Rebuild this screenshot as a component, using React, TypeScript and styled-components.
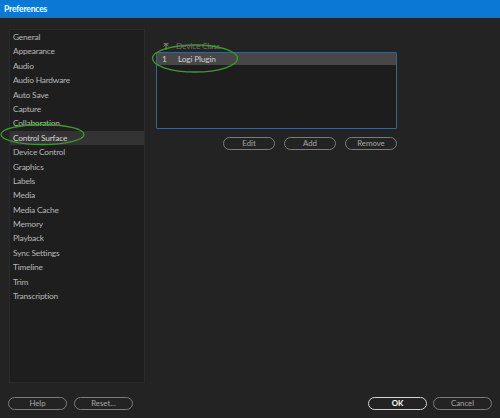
import React from 'react'
import styled, { createGlobalStyle } from 'styled-components'

const GlobalStyle = createGlobalStyle`
  html, body {
    margin: 0;
    padding: 0;
    background: #232323;
  }
  body {
    font-family: Lato, "Liberation Sans", sans-serif;
    -webkit-font-smoothing: antialiased;
  }
`

const Window = styled.div`
  width: 500px;
  height: 418px;
  display: flex;
  flex-direction: column;
  background: #232323;
  position: relative;
  overflow: hidden;
`

const TitleBar = styled.div`
  height: 18px;
  flex: none;
  background: #0a78d4;
  color: #ffffff;
  font-size: 8.6px;
  font-weight: 700;
  letter-spacing: -0.2px;
  display: flex;
  align-items: center;
  padding-left: 4px;
  padding-bottom: 1px;
  box-sizing: border-box;
`

const Body = styled.div`
  display: flex;
  gap: 11px;
  padding: 11px 0 0 9px;
  height: 354px;
`

const Sidebar = styled.ul`
  width: 136px;
  height: 354px;
  box-sizing: border-box;
  margin: 0;
  padding: 0;
  list-style: none;
  background: #1e1e1e;
  border: 1px solid #2b2b2b;
`

const NavItem = styled.li<{ $active?: boolean }>`
  height: 14.4px;
  line-height: 14.4px;
  padding-left: 3px;
  font-size: 8.4px;
  letter-spacing: -0.2px;
  color: ${(p) => (p.$active ? '#d6d6d6' : '#b8b8b8')};
  background: ${(p) => (p.$active ? '#333333' : 'transparent')};
  white-space: nowrap;
`

const Pane = styled.div`
  width: 241px;
  display: flex;
  flex-direction: column;
  padding-top: 11px;
`

const ColumnHeader = styled.div`
  height: 12px;
  display: flex;
  align-items: center;
  font-size: 8.4px;
  letter-spacing: -0.2px;
  color: #6f6f6f;
  padding-left: 7px;
  gap: 7px;
`

const Table = styled.div`
  height: 77px;
  box-sizing: border-box;
  background: #1d1d1d;
  border: 1px solid #3f6488;
  border-radius: 1px;
`

const Row = styled.div<{ $selected?: boolean }>`
  height: 12px;
  display: flex;
  align-items: center;
  font-size: 8.4px;
  letter-spacing: -0.2px;
  color: #d0d0d0;
  background: ${(p) => (p.$selected ? '#474747' : 'transparent')};
`

const RowIndex = styled.span`
  width: 21px;
  padding-left: 5px;
  box-sizing: border-box;
`

const ButtonRow = styled.div`
  display: flex;
  justify-content: flex-end;
  gap: 9px;
  margin-top: 8px;
`

const Pill = styled.button<{ $w: number; $primary?: boolean }>`
  width: ${(p) => p.$w}px;
  height: 13px;
  padding: 0;
  border-radius: 7px;
  background: transparent;
  border: 1px solid ${(p) => (p.$primary ? '#d4d4d4' : '#7c7c7c')};
  color: ${(p) => (p.$primary ? '#ffffff' : '#a8a8a8')};
  font-family: inherit;
  font-size: 7.8px;
  font-weight: ${(p) => (p.$primary ? 700 : 400)};
  line-height: 11px;
  box-sizing: border-box;
`

const Footer = styled.div`
  display: flex;
  justify-content: space-between;
  padding: 14px 8px 0 8px;
`

const Group = styled.div<{ $gap: number }>`
  display: flex;
  gap: ${(p) => p.$gap}px;
`

const Annotation = styled.svg`
  position: absolute;
  left: 0;
  top: 0;
  pointer-events: none;
  overflow: visible;
`

const items = [
  'General',
  'Appearance',
  'Audio',
  'Audio Hardware',
  'Auto Save',
  'Capture',
  'Collaboration',
  'Control Surface',
  'Device Control',
  'Graphics',
  'Labels',
  'Media',
  'Media Cache',
  'Memory',
  'Playback',
  'Sync Settings',
  'Timeline',
  'Trim',
  'Transcription',
]

const SortIcon = () => (
  <svg width="6" height="7" viewBox="0 0 6 7">
    <path d="M0.5 0.8H5.5M3 1.2V7M1 3.3L3 1.3L5 3.3" stroke="#8a8a8a" strokeWidth="1" fill="none" />
  </svg>
)

export default function App() {
  return (
    <Window>
      <GlobalStyle />
      <TitleBar>Preferences</TitleBar>
      <Body>
        <Sidebar>
          {items.map((it) => (
            <NavItem key={it} $active={it === 'Control Surface'}>
              {it}
            </NavItem>
          ))}
        </Sidebar>
        <Pane>
          <ColumnHeader>
            <SortIcon />
            <span>Device Class</span>
          </ColumnHeader>
          <Table>
            <Row $selected>
              <RowIndex>1</RowIndex>
              <span>Logi Plugin</span>
            </Row>
          </Table>
          <ButtonRow>
            <Pill $w={52}>Edit</Pill>
            <Pill $w={52}>Add</Pill>
            <Pill $w={52}>Remove</Pill>
          </ButtonRow>
        </Pane>
      </Body>
      <Footer>
        <Group $gap={7}>
          <Pill $w={59}>Help</Pill>
          <Pill $w={59}>Reset...</Pill>
        </Group>
        <Group $gap={6}>
          <Pill $w={59} $primary>OK</Pill>
          <Pill $w={59}>Cancel</Pill>
        </Group>
      </Footer>
      <Annotation width="500" height="418">
        <ellipse cx="42.5" cy="134.5" rx="41.5" ry="10" fill="none" stroke="#3f9b2c" strokeWidth="1.3" />
        <ellipse cx="195" cy="58.5" rx="42.5" ry="13.5" fill="none" stroke="#3f9b2c" strokeWidth="1.3" />
      </Annotation>
    </Window>
  )
}
